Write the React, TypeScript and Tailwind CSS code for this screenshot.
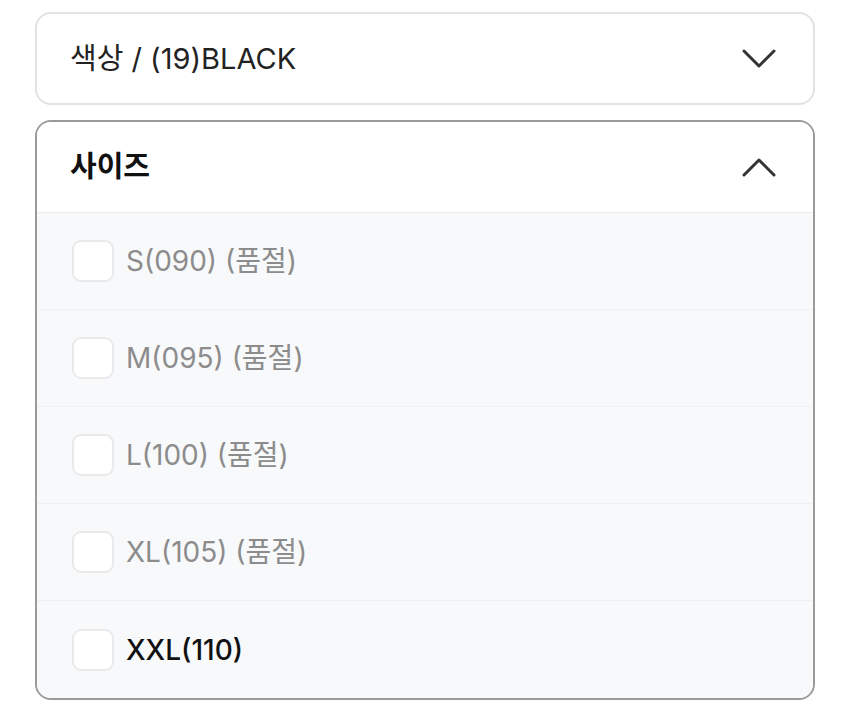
import React from 'react';

const sizes = [
  {label: 'S(090) (품절)', soldOut: true},
  {label: 'M(095) (품절)', soldOut: true},
  {label: 'L(100) (품절)', soldOut: true},
  {label: 'XL(105) (품절)', soldOut: true},
  {label: 'XXL(110)', soldOut: false},
];

function Chevron({up}: {up?: boolean}) {
  return (
    <svg width="34" height="20" viewBox="0 0 34 20" fill="none">
      <path
        d={up ? 'M2 18L17 3L32 18' : 'M2 2L17 17L32 2'}
        stroke="#333"
        strokeWidth="3"
        strokeLinecap="round"
        strokeLinejoin="round"
      />
    </svg>
  );
}

export default function App() {
  return (
    <div
      className="w-[850px] h-[718px] bg-white px-[35px] pt-[12px] flex flex-col gap-[15px]"
      style={{fontFamily: 'Inter, "Noto Sans CJK KR", sans-serif'}}
    >
      {/* color select (collapsed) */}
      <div className="h-[93px] border-2 border-[#e2e2e2] rounded-[16px] pl-[33px] pr-[37px] flex items-center justify-between">
        <span className="text-[29px] text-[#222]">색상 / (19)BLACK</span>
        <Chevron />
      </div>

      {/* size select (open) */}
      <div className="border-2 border-[#9a9a9a] rounded-[16px] overflow-hidden">
        <div className="h-[91px] bg-white pl-[33px] pr-[37px] flex items-center justify-between border-b border-[#e9ebee]">
          <span className="text-[29px] font-bold text-[#111]">사이즈</span>
          <Chevron up />
        </div>
        <div className="bg-[#f8f9fb]">
          {sizes.map((s, i) => (
            <div
              key={s.label}
              className={
                'h-[97px] pl-[35px] flex items-center gap-[12px] ' +
                (i < sizes.length - 1 ? 'border-b border-[#eef0f3]' : '')
              }
            >
              <div className="w-[42px] h-[42px] rounded-[9px] bg-white border-2 border-[#eaeaea]" />
              <span
                className={
                  s.soldOut
                    ? 'text-[28px] text-[#8c8c8c]'
                    : 'text-[28px] text-[#111] font-medium'
                }
              >
                {s.label}
              </span>
            </div>
          ))}
        </div>
      </div>
    </div>
  );
}
